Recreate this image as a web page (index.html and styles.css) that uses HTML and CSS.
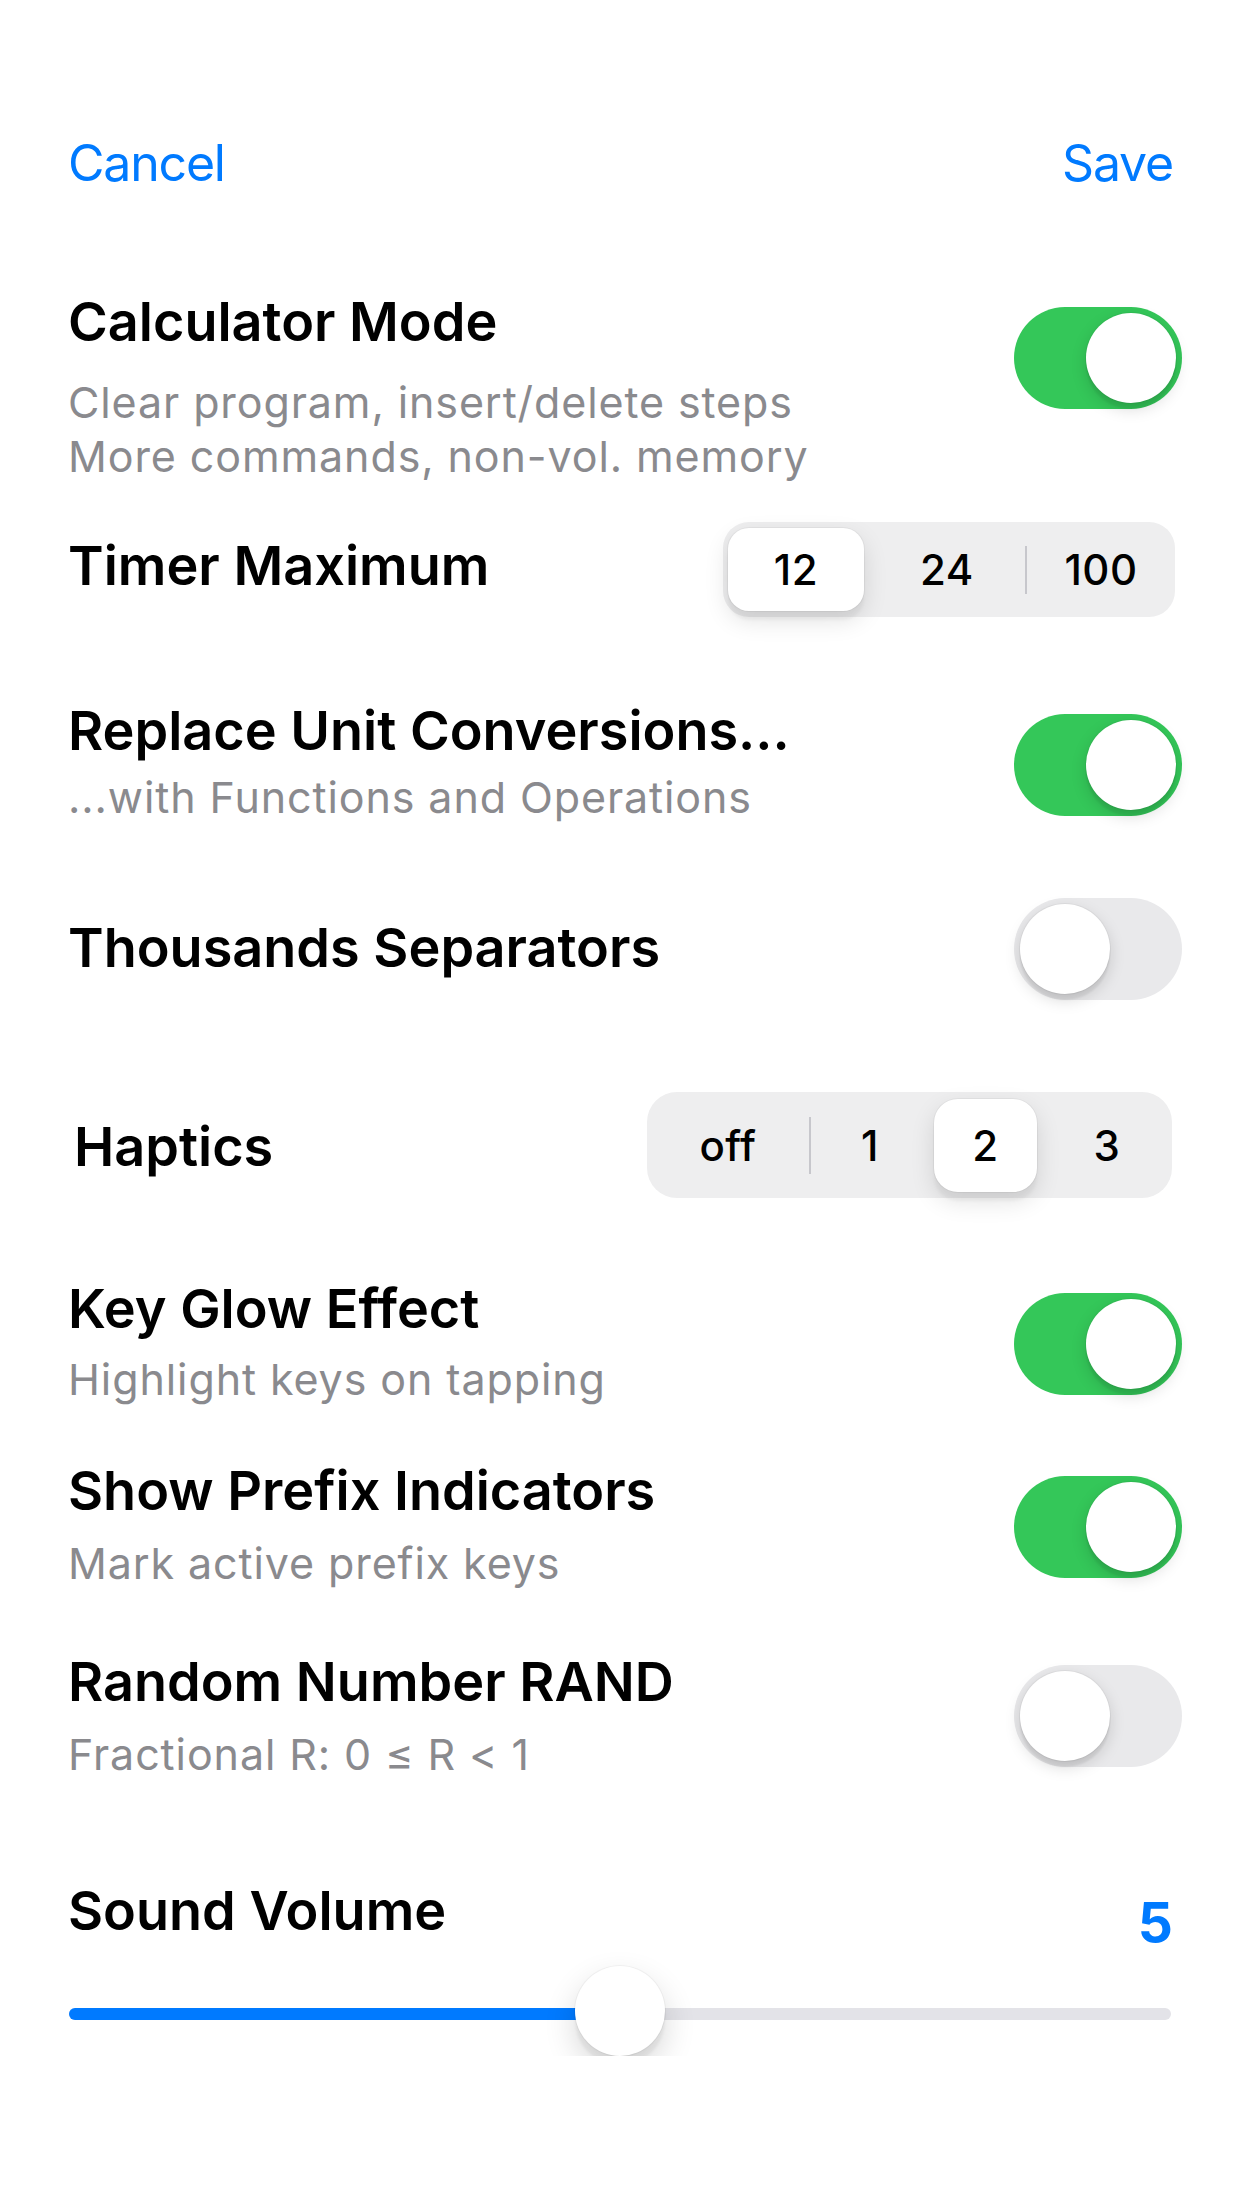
FILE: index.html
```html
<!DOCTYPE html>
<html lang="en">
<head>
  <meta charset="UTF-8">
  <meta name="viewport" content="width=device-width, initial-scale=1">
  <title>Settings</title>
  <link rel="stylesheet" href="styles.css">
</head>
<body>

  <div class="screen">
    <div class="nav">
      <span class="nav-btn">Cancel</span>
      <span class="nav-btn">Save</span>
    </div>

    <div class="row row-calc">
      <div class="text">
        <div class="title">Calculator Mode</div>
        <div class="sub sub-calc">Clear program, insert/delete steps<br>More commands, non-vol. memory</div>
      </div>
      <div class="switch on sw-calc"><div class="knob"></div></div>
    </div>

    <div class="row row-timer">
      <div class="title title-timer">Timer Maximum</div>
      <div class="segmented seg-timer">
        <div class="segment w146"><div class="pill">12</div></div>
        <div class="segment w156">24</div>
        <div class="sep"></div>
        <div class="segment w148">100</div>
      </div>
    </div>

    <div class="row row-replace">
      <div class="text">
        <div class="title">Replace Unit Conversions...</div>
        <div class="sub sub-replace">...with Functions and Operations</div>
      </div>
      <div class="switch on sw-replace"><div class="knob"></div></div>
    </div>

    <div class="row row-thousands">
      <div class="title title-thousands">Thousands Separators</div>
      <div class="switch"><div class="knob"></div></div>
    </div>

    <div class="row row-haptics">
      <div class="title title-haptics">Haptics</div>
      <div class="segmented seg-haptics">
        <div class="segment w162">off</div>
        <div class="sep"></div>
        <div class="segment w118">1</div>
        <div class="segment w113"><div class="pill">2</div></div>
        <div class="segment w130">3</div>
      </div>
    </div>

    <div class="row row-glow">
      <div class="text">
        <div class="title">Key Glow Effect</div>
        <div class="sub sub-glow">Highlight keys on tapping</div>
      </div>
      <div class="switch on sw-glow"><div class="knob"></div></div>
    </div>

    <div class="row row-prefix">
      <div class="text">
        <div class="title">Show Prefix Indicators</div>
        <div class="sub sub-prefix">Mark active prefix keys</div>
      </div>
      <div class="switch on sw-prefix"><div class="knob"></div></div>
    </div>

    <div class="row row-rand">
      <div class="text">
        <div class="title">Random Number RAND</div>
        <div class="sub sub-rand">Fractional R: 0 ≤ R &lt; 1</div>
      </div>
      <div class="switch sw-rand"><div class="knob"></div></div>
    </div>

    <div class="row row-sound">
      <div class="title">Sound Volume</div>
      <div class="value">5</div>
    </div>

    <div class="slider">
      <div class="track"><div class="fill" style="width: 50%"></div></div>
      <div class="thumb" style="left: calc(50% - 45px)"></div>
    </div>
  </div>

</body>
</html>
```

FILE: styles.css
```css
body {
  margin: 0;
  background: #fff;
  font-family: Inter, "Liberation Sans", Arial, sans-serif;
  color: #000;
}

.screen {
  padding: 0 69px 0 68px;
}

/* Nav bar */
.nav {
  display: flex;
  justify-content: space-between;
  margin-top: 133px;
  font-size: 50px;
  line-height: 60px;
  letter-spacing: -1.2px;
  color: #007aff;
}

/* Rows */
.row {
  display: flex;
  justify-content: space-between;
  align-items: flex-start;
}

.title {
  font-size: 54px;
  line-height: 64px;
  font-weight: 600;
}

.sub {
  font-size: 43px;
  line-height: 54px;
  letter-spacing: 0.9px;
  color: #8a8a8e;
}

.row-calc { margin-top: 97px; }
.sub-calc { margin-top: 21px; }
.sw-calc { margin-top: 17px; }

.row-timer { margin-top: 39px; }
.title-timer { margin-top: 12px; }

.row-replace { margin-top: 82px; }
.sub-replace { margin-top: 7px; }
.sw-replace { margin-top: 15px; }

.row-thousands { margin-top: 74px; }
.title-thousands { margin-top: 18px; }

.row-haptics { margin-top: 92px; }
.title-haptics { margin-top: 23px; padding-left: 6px; }

.row-glow { margin-top: 79px; }
.sub-glow { margin-top: 11px; }
.sw-glow { margin-top: 16px; }

.row-prefix { margin-top: 53px; }
.sub-prefix { margin-top: 13px; }
.sw-prefix { margin-top: 17px; }

.row-rand { margin-top: 60px; }
.sub-rand { margin-top: 13px; }
.sw-rand { margin-top: 15px; }

.row-sound { margin-top: 98px; }

.value {
  margin-top: 11px;
  font-size: 55px;
  line-height: 64px;
  font-weight: 700;
  color: #007aff;
}

/* Switch */
.switch {
  width: 168px;
  height: 102px;
  box-sizing: border-box;
  padding: 6px;
  border-radius: 51px;
  background: #e9e9eb;
  display: flex;
  margin-right: -9px;
  flex-shrink: 0;
}

.switch.on {
  background: #34c759;
  justify-content: flex-end;
}

.knob {
  width: 90px;
  height: 90px;
  border-radius: 50%;
  background: #fff;
  box-shadow: 0 6px 16px rgba(0,0,0,0.15), 0 6px 2px rgba(0,0,0,0.06), 0 0 0 1px rgba(0,0,0,0.04);
}

/* Segmented control */
.segmented {
  display: flex;
  align-items: center;
  background: #eeeeef;
  flex-shrink: 0;
}

.seg-timer {
  height: 95px;
  border-radius: 26px;
  margin-right: -2px;
}

.seg-haptics {
  height: 106px;
  border-radius: 30px;
  margin-right: 1px;
}

.segment {
  align-self: stretch;
  display: flex;
  align-items: center;
  justify-content: center;
  font-size: 42px;
  font-weight: 500;
  letter-spacing: 0.5px;
}

.w146 { width: 146px; }
.w156 { width: 156px; }
.w148 { width: 148px; }
.w162 { width: 162px; }
.w118 { width: 118px; }
.w113 { width: 113px; }
.w130 { width: 130px; }

.pill {
  flex: 1;
  align-self: stretch;
  margin: 6px 5px;
  display: flex;
  align-items: center;
  justify-content: center;
  background: #fff;
  border-radius: 21px;
  box-shadow: 0 9px 24px rgba(0,0,0,0.12), 0 9px 3px rgba(0,0,0,0.04), 0 0 0 1px rgba(0,0,0,0.04);
}

.seg-haptics .pill {
  margin: 7px 5px 6px;
  border-radius: 24px;
}

.sep {
  width: 2px;
  height: 48px;
  background: #c7c7cc;
}

.seg-haptics .sep {
  height: 57px;
}

/* Slider */
.slider {
  position: relative;
  height: 90px;
  margin: 12px 2px 0 1px;
}

.track {
  position: relative;
  top: 42px;
  height: 12px;
  border-radius: 6px;
  background: #e3e3e8;
  overflow: hidden;
}

.fill {
  height: 100%;
  background: #007aff;
}

.thumb {
  position: absolute;
  top: 0;
  width: 90px;
  height: 90px;
  border-radius: 50%;
  background: #fff;
  box-shadow: 0 14px 32px rgba(0,0,0,0.16), 0 9px 3px rgba(0,0,0,0.05), 0 0 0 1px rgba(0,0,0,0.04);
}
```
